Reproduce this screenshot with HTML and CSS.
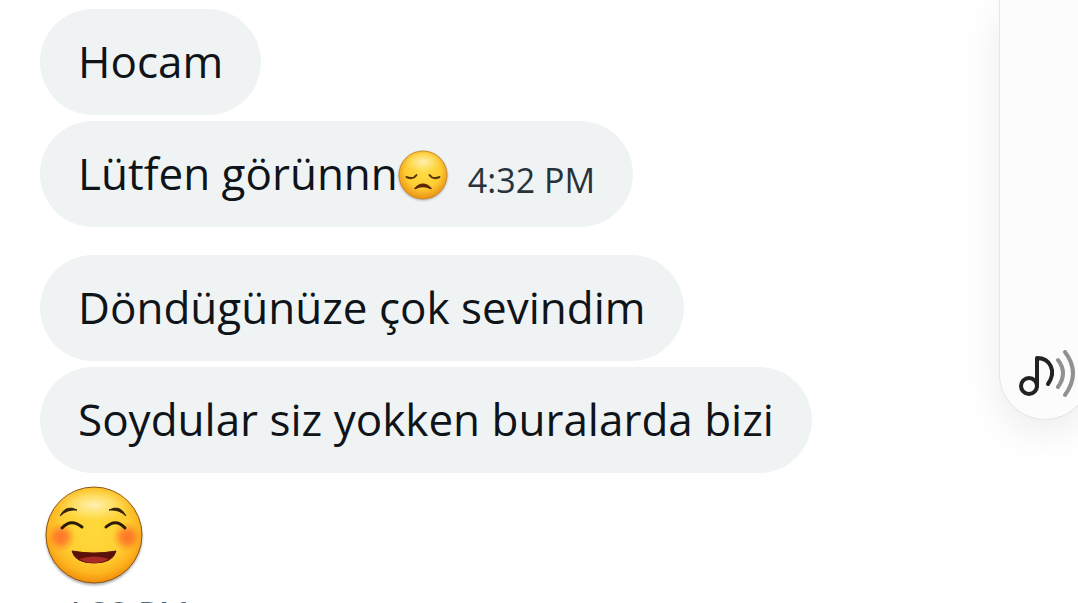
FILE: index.html
```html
<!DOCTYPE html>
<html lang="tr">
<head>
    <meta charset="UTF-8">
    <meta name="viewport" content="width=device-width, initial-scale=1.0">
    <title>Messages</title>
    <link rel="stylesheet" href="styles.css">
</head>
<body>
    <main class="chat">
        <div class="group">
            <p class="bubble">Hocam</p>
            <p class="bubble">Lütfen görünnn<svg class="emoji" viewBox="0 0 100 100" role="img" aria-label="disappointed face">
                    <defs>
                        <radialGradient id="sadFace" cx="50%" cy="42%" r="60%">
                            <stop offset="0" stop-color="#ffdc45"/>
                            <stop offset="0.6" stop-color="#fecd33"/>
                            <stop offset="1" stop-color="#ea8a10"/>
                        </radialGradient>
                    </defs>
                    <circle cx="50" cy="50" r="48" fill="url(#sadFace)" stroke="#c98a2c" stroke-width="2"/>
                    <ellipse cx="50" cy="24" rx="38" ry="22" fill="url(#shine)"/>
                    <path d="M17 54Q30 60 37 50M83 54Q70 60 63 50" fill="none" stroke="#5a3606" stroke-width="4" stroke-linecap="round"/>
                    <path d="M34 77Q50 60 66 77Q50 69 34 77z" fill="#5a2608" stroke="#5a2608" stroke-width="3" stroke-linejoin="round"/>
                </svg><time class="time">4:32 PM</time></p>
        </div>
        <div class="group">
            <p class="bubble">Döndügünüze çok sevindim</p>
            <p class="bubble">Soydular siz yokken buralarda bizi</p>
            <svg class="emoji-large" viewBox="0 0 100 100" role="img" aria-label="smiling face">
                <defs>
                    <radialGradient id="happyFace" cx="50%" cy="42%" r="60%">
                        <stop offset="0" stop-color="#ffd93a"/>
                        <stop offset="0.55" stop-color="#fed034"/>
                        <stop offset="0.8" stop-color="#fdb41f"/>
                        <stop offset="1" stop-color="#f08508"/>
                    </radialGradient>
                    <radialGradient id="shine">
                        <stop offset="0" stop-color="#fff6cc" stop-opacity="0.85"/>
                        <stop offset="0.5" stop-color="#ffefa0" stop-opacity="0.5"/>
                        <stop offset="1" stop-color="#ffe36a" stop-opacity="0"/>
                    </radialGradient>
                    <radialGradient id="blush">
                        <stop offset="0" stop-color="#ff6426" stop-opacity="0.85"/>
                        <stop offset="0.4" stop-color="#ff6a28" stop-opacity="0.7"/>
                        <stop offset="1" stop-color="#ff8a20" stop-opacity="0"/>
                    </radialGradient>
                </defs>
                <circle cx="50" cy="50" r="48" fill="url(#happyFace)" stroke="#8a5514" stroke-width="1"/>
                <ellipse cx="50" cy="20" rx="38" ry="17" fill="url(#shine)"/>
                <circle cx="17" cy="52" r="15" fill="url(#blush)"/>
                <circle cx="83" cy="52" r="15" fill="url(#blush)"/>
                <path d="M16 31Q22 19 33 25Q23 24 16 31zM82 31Q76 19 65 25Q75 24 82 31z" fill="#33240c" stroke="#33240c" stroke-width="1" stroke-linejoin="round"/>
                <path d="M18 43Q27 33 38 42M62 42Q72 33 81 43" fill="none" stroke="#2c1a08" stroke-width="3" stroke-linecap="round"/>
                <path d="M28 66Q50 70 72 66Q69 78 50 78Q31 78 28 66z" fill="#5c100a" stroke="#5c100a" stroke-width="1" stroke-linejoin="round"/>
                <path d="M35 74Q50 69 65 74Q58 78 50 78Q42 78 35 74z" fill="#a82a24"/>
            </svg>
            <time class="time time-below">4:33 PM</time>
        </div>
    </main>
    <aside class="sound-panel">
        <button class="sound-button" type="button" aria-label="Sound">
            <svg class="sound-icon" viewBox="0 0 58 50" fill="none" stroke-width="4" stroke-linecap="round" stroke-linejoin="round">
                <g stroke="#222">
                    <circle cx="10" cy="36" r="8"/>
                    <path d="M18 36V8C31 8 38 21 29 34"/>
                </g>
                <path d="M39 10Q49 23 39 37M46 2Q62 23 46 45" stroke="#919191"/>
            </svg>
        </button>
    </aside>
</body>
</html>
```

FILE: styles.css
```css
* {
    box-sizing: border-box;
}
body {
    margin: 0;
    background: #fff;
    color: #0f1419;
    font-family: "Open Sans", "Noto Sans", sans-serif;
    font-size: 44px;
    line-height: 60px;
    overflow: hidden;
}
.chat {
    display: flex;
    flex-direction: column;
    gap: 28px;
    height: 100vh;
    padding: 9px 40px 0;
    overflow: hidden;
}
.group {
    display: flex;
    flex-direction: column;
    align-items: flex-start;
    gap: 6px;
}
.bubble {
    display: flex;
    align-items: center;
    min-height: 106px;
    margin: 0;
    padding: 22px 38px 24px;
    border-radius: 53px;
    background: #eff3f4;
}
.emoji {
    flex: none;
    width: 50px;
    height: 50px;
    margin-top: 3px;
    filter: drop-shadow(0 1px 1px rgba(0, 0, 0, 0.25));
}
.time {
    margin: 14px 0 0 20px;
    color: #28323a;
    font-size: 34px;
    line-height: 46px;
}
.emoji-large {
    width: 100px;
    height: 100px;
    margin: 6px 4px 0;
    filter: drop-shadow(0 2px 1px rgba(0, 0, 0, 0.3));
}
.time-below {
    margin: 0 22px;
    color: #536471;
}
.sound-panel {
    position: fixed;
    top: 0;
    right: -13px;
    display: flex;
    align-items: flex-end;
    width: 92px;
    height: 420px;
    border: 1px solid #e6e6e6;
    border-top: 0;
    border-radius: 0 0 46px 46px;
    background: #fcfcfc;
    box-shadow: 0 12px 40px rgba(0, 0, 0, 0.08);
}
.sound-button {
    margin: 0 0 19px 19px;
    padding: 0;
    border: 0;
    background: none;
    cursor: pointer;
}
.sound-icon {
    display: block;
    width: 58px;
    height: 50px;
}
```
